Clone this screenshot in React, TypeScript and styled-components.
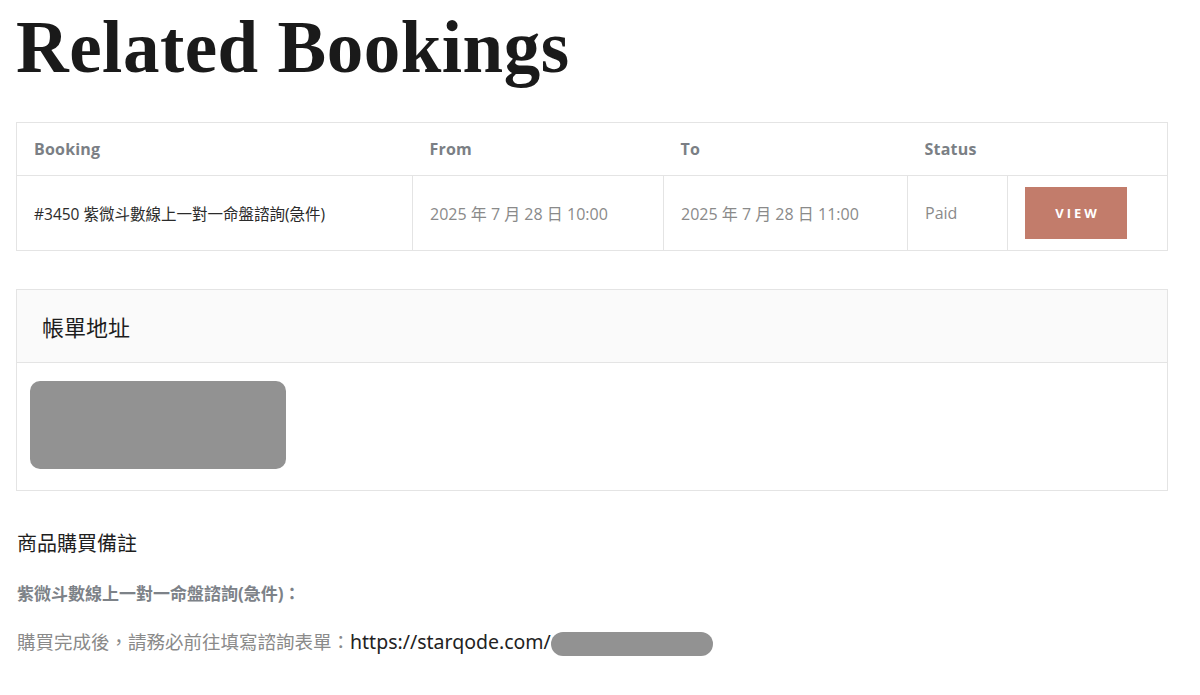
import * as React from 'react';
import styled, { createGlobalStyle } from 'styled-components';

const GlobalStyle = createGlobalStyle`
  *, *::before, *::after {
    box-sizing: border-box;
  }
  html, body {
    margin: 0;
    padding: 0;
    background: #ffffff;
  }
  body {
    font-family: 'Open Sans', 'Noto Sans CJK TC', sans-serif;
    color: #333333;
  }
`;

const Page = styled.div`
  width: 1168px;
  padding: 12px 0 40px 16px;
`;

const Title = styled.h1`
  margin: 0 0 38px 0;
  font-family: 'Liberation Serif', 'Noto Sans CJK TC', serif;
  font-weight: 700;
  font-size: 73px;
  line-height: 72px;
  letter-spacing: 0.5px;
  color: #1a1a1a;
`;

const Table = styled.table`
  width: 1152px;
  border-collapse: collapse;
  border: 1px solid #e4e4e4;
  table-layout: fixed;
`;

const HeadCell = styled.th<{ $w?: number }>`
  width: ${(p) => (p.$w ? `${p.$w}px` : 'auto')};
  height: 53px;
  padding: 0 17px;
  text-align: left;
  font-family: 'Open Sans', sans-serif;
  font-weight: 700;
  font-size: 16px;
  letter-spacing: 0.2px;
  color: #7b7f85;
  border-bottom: 1px solid #e4e4e4;
`;

const Cell = styled.td<{ $muted?: boolean }>`
  height: 75px;
  padding: 0 17px;
  border-left: 1px solid #e4e4e4;
  font-family: 'Open Sans', 'Noto Sans CJK TC', sans-serif;
  font-size: ${(p) => (p.$muted ? '16px' : '15.5px')};
  color: ${(p) => (p.$muted ? '#8a8a8a' : '#2b2b2b')};
  white-space: nowrap;
  &:first-child {
    border-left: none;
  }
`;

const ViewButton = styled.button`
  display: block;
  width: 102px;
  height: 52px;
  border: none;
  background: #c27c6b;
  color: #ffffff;
  font-family: 'Open Sans', sans-serif;
  font-weight: 700;
  font-size: 13px;
  letter-spacing: 3px;
  padding: 0 0 0 3px;
  cursor: pointer;
`;

const AddressBox = styled.section`
  margin-top: 38px;
  border: 1px solid #e4e4e4;
`;

const AddressHead = styled.header`
  height: 73px;
  display: flex;
  align-items: center;
  padding-left: 25px;
  background: #fafafa;
  border-bottom: 1px solid #e4e4e4;
`;

const AddressTitle = styled.h3`
  margin: 0;
  font-family: 'Liberation Serif', 'Noto Sans CJK TC', serif;
  font-weight: 400;
  font-size: 22px;
  color: #1e1e1e;
`;

const AddressBody = styled.div`
  display: flex;
  padding: 18px 13px 21px;
`;

const Redacted = styled.span<{ $w: number; $h: number; $r: number }>`
  display: inline-block;
  width: ${(p) => p.$w}px;
  height: ${(p) => p.$h}px;
  border-radius: ${(p) => p.$r}px;
  background: #929292;
  vertical-align: middle;
`;

const NotesTitle = styled.h3`
  margin: 29px 0 0 1px;
  font-family: 'Liberation Serif', 'Noto Sans CJK TC', serif;
  font-weight: 400;
  font-size: 20px;
  line-height: 48px;
  color: #1e1e1e;
`;

const NoteLabel = styled.p`
  margin: 2px 0 0 1px;
  font-family: 'Noto Sans', 'Noto Sans CJK TC', sans-serif;
  font-weight: 700;
  font-size: 17px;
  line-height: 48px;
  color: #7d8288;
`;

const NoteText = styled.p`
  margin: 0 0 0 1px;
  font-family: 'Noto Sans', 'Noto Sans CJK TC', sans-serif;
  font-size: 18.5px;
  line-height: 48px;
  color: #8a8a8a;
`;

const Link = styled.span`
  color: #222222;
  font-size: 19.5px;
`;

export default function App() {
  return (
    <>
      <GlobalStyle />
      <Page>
        <Title>Related Bookings</Title>
        <Table>
          <thead>
            <tr>
              <HeadCell $w={396}>Booking</HeadCell>
              <HeadCell $w={251}>From</HeadCell>
              <HeadCell $w={244}>To</HeadCell>
              <HeadCell $w={100}>Status</HeadCell>
              <HeadCell />
            </tr>
          </thead>
          <tbody>
            <tr>
              <Cell>#3450 紫微斗數線上一對一命盤諮詢(急件)</Cell>
              <Cell $muted>2025 年 7 月 28 日 10:00</Cell>
              <Cell $muted>2025 年 7 月 28 日 11:00</Cell>
              <Cell $muted>Paid</Cell>
              <Cell>
                <ViewButton>VIEW</ViewButton>
              </Cell>
            </tr>
          </tbody>
        </Table>

        <AddressBox>
          <AddressHead>
            <AddressTitle>帳單地址</AddressTitle>
          </AddressHead>
          <AddressBody>
            <Redacted $w={256} $h={88} $r={10} />
          </AddressBody>
        </AddressBox>

        <NotesTitle>商品購買備註</NotesTitle>
        <NoteLabel>紫微斗數線上一對一命盤諮詢(急件)：</NoteLabel>
        <NoteText>
          購買完成後，請務必前往填寫諮詢表單：<Link>https://starqode.com/</Link>
          <Redacted $w={162} $h={24} $r={12} />
        </NoteText>
      </Page>
    </>
  );
}
